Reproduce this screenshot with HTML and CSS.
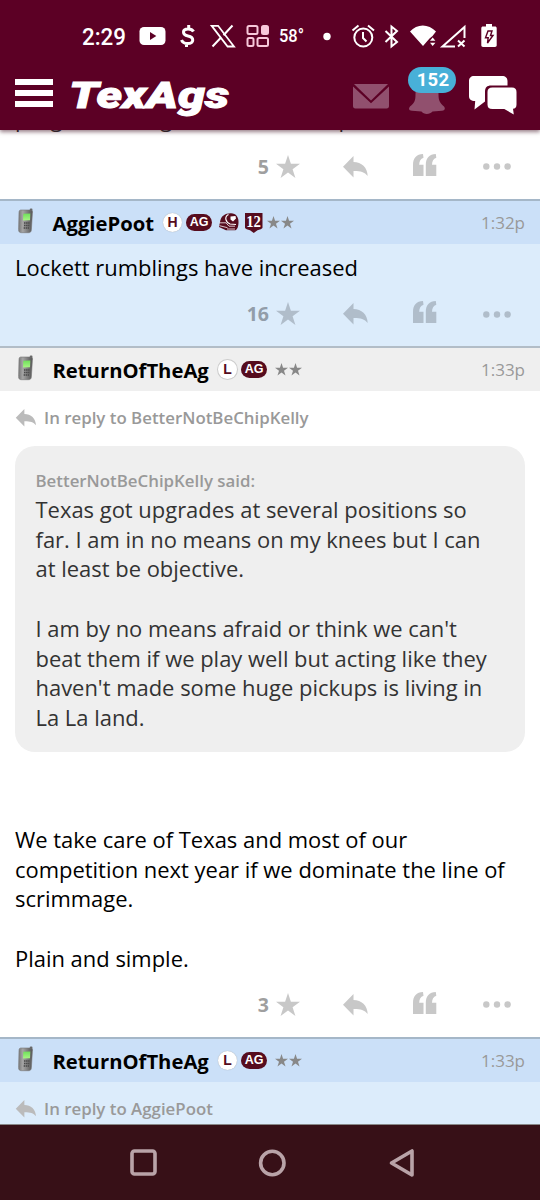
FILE: index.html
```html
<!DOCTYPE html>
<html lang="en">
<head>
<meta charset="utf-8">
<title>TexAgs</title>
<link rel="stylesheet" href="styles.css">
</head>
<body>
<svg class="defs" aria-hidden="true">
  <defs>
    <linearGradient id="case" x1="0" x2="1"><stop offset="0" stop-color="#777"/><stop offset=".3" stop-color="#a5a5a5"/><stop offset="1" stop-color="#555"/></linearGradient>
    <linearGradient id="lcd" x1="0" y1="0" x2="0" y2="1"><stop offset="0" stop-color="#6fe05a"/><stop offset="1" stop-color="#a8f585"/></linearGradient>
  </defs>
  <symbol id="star" viewBox="0 0 24 24"><path d="M12 0l2.900 8.700H24l-7.400 5.500L19.400 23 12 17.600 4.600 23l2.800-8.800L0 8.700h9.100z"/></symbol>
  <symbol id="reply" viewBox="0 0 25 22"><path d="M0 10.800L10.500 0v6C18.500 6 24.500 11.500 24.700 20 21.500 15.800 17 14.900 10.500 15v6.500z"/></symbol>
  <symbol id="quote" viewBox="0 0 24 22"><path d="M0 22V11C0 4 3.500.3 10 0l.5 3.700C7.500 4.600 6.400 7 6.200 10.700h4.300V22zM12.800 22V11C12.800 4 16.300.3 22.800 0l.5 3.700c-3 .9-4.100 3.300-4.300 7h4.300V22z"/></symbol>
  <symbol id="dots" viewBox="0 0 28 7"><circle cx="3.300" cy="3.500" r="3.200"/><circle cx="14" cy="3.500" r="3.200"/><circle cx="24.600" cy="3.500" r="3.200"/></symbol>
  <symbol id="phone" viewBox="0 0 16 26"><path d="M11.800 4V1c0-.8 2.600-.8 2.600 0v4z" fill="#666"/><path d="M3 2h9.500c1.600 0 2 1 1.900 3l-1 16.500c-.2 2.500-1 3.200-3 3.200H3.500c-2 0-3-.9-2.900-3.200L1 4.500C1.100 2.700 1.600 2 3 2z" fill="url(#case)" stroke="#777" stroke-width=".6"/><path d="M5.300 5.800l7-.3-.3 6.800-7 .2z" fill="url(#lcd)"/><path d="M6 15h5.500M6 17.500h5.300M5.700 20H11" stroke="#484848" stroke-width="1.300" stroke-dasharray="1.500 .6"/></symbol>
</svg>
<div class="screen">
  <header class="top">
    <div class="status">
      <svg class="status-icons" width="540" height="60" viewBox="0 0 540 60" fill="#fff">
        <text x="82" y="44.500" class="clock" textLength="44" lengthAdjust="spacingAndGlyphs">2:29</text>
        <rect x="139.500" y="27" width="26" height="18" rx="4.500"/><path d="M150 32v8l6.300-4z" fill="#5c0025"/>
        <g fill="none" stroke="#fff" stroke-width="3"><path d="M193.500 31.500c-1-2-3-2.600-5.500-2.600-6 0-6 6 0 7.100 6.500 1.300 6.300 7.500-.5 7.500-3 0-5-1-6-3.500M188.700 25v4M186.500 43v4"/></g>
        <path d="M211.700 25.800h6.400L234 46.500h-6.400z" fill="none" stroke="#fff" stroke-width="1.800"/><path d="M232.500 25.500l-9 9.800M221 37.500l-8.500 9" stroke="#fff" stroke-width="2"/>
        <g fill="none" stroke="#f7c8da" stroke-width="2"><rect x="247.500" y="26" width="10" height="8" rx="1.500"/><rect x="247.500" y="38" width="6" height="8" rx="1.500"/><rect x="257.500" y="38" width="10.500" height="8" rx="1.500"/><rect x="262" y="26" width="6" height="8" rx="1.500" fill="#f7c8da"/></g>
        <text x="279" y="42" class="temp" textLength="25" lengthAdjust="spacingAndGlyphs">58°</text>
        <circle cx="327" cy="36.500" r="3.700"/>
        <g fill="none" stroke="#fff" stroke-width="2"><circle cx="363.300" cy="37.500" r="9"/><path d="M363 32v6l3.500 3.500M352.500 30.500l6-5M374 30.500l-6-5"/><path d="M385.500 31l11.500 11-5.500 4.500V26.500l5.500 4.500-11.500 11"/></g>
        <path d="M410 31.500c7-8 18.500-8 26 0l-3.500 4.500-3 2.500-6.500 7.500z"/><path d="M430 40.700l2.700-3.200 2.700 3.200zM430 42.800l2.700 3.200 2.700-3.200z"/>
        <path d="M455 46.500h-12.500L464.500 27v11" fill="none" stroke="#fff" stroke-width="2"/><path d="M458 40.500l6.500 6M464.500 40.500l-6.500 6" stroke="#fff" stroke-width="2"/>
        <path d="M483 26.500h3V24h6v2.500h3c1 0 1.700.7 1.700 1.700v17c0 1-.7 1.700-1.700 1.700h-12c-1 0-1.700-.7-1.700-1.700v-17c0-1 .7-1.700 1.700-1.700z"/><path d="M488 31h4l-1.500 4.500h2.500l-5.500 7.500.7-5.300H485.500z" fill="none" stroke="#5c0025" stroke-width="1.400"/>
      </svg>
    </div>
    <div class="bar">
      <span class="menu"><i></i><i></i><i></i></span>
      <svg class="logo" width="160" height="40" viewBox="0 0 160 40"><text x="-3" y="32" textLength="160" lengthAdjust="spacingAndGlyphs">TexAgs</text></svg>
      <svg class="mail" width="36" height="25" viewBox="0 0 36 25" fill="#91506e"><path d="M1 0h34L18 16.500z"/><path d="M0 2.500l18 16.800L36 2.500V22c0 1.600-.8 2.400-2.400 2.400H2.400C.8 24.400 0 23.600 0 22z"/></svg>
      <span class="bell">
        <svg width="36" height="34" viewBox="0 0 36 34" fill="#91506e"><path d="M18 0C9 0 6.500 6 6.500 13c0 7-1 9-5.500 12.500-2 2.500-.8 4 2 4.300l9.500.8c2 3.200 8.500 3.200 11 0l9.500-.8c3-.3 3.500-2.200 2-4.300C31 22 29.500 20 29.500 13 29.500 6 27 0 18 0z"/></svg>
        <b class="unread">152</b>
      </span>
      <svg class="chat" width="48" height="40" viewBox="0 0 48 40" fill="#fff"><path d="M5 0h28c3.500 0 5.500 2 5.500 5v4.500H22c-4 0-6 2-6 6v10L5.500 33.500l.7-8.500C2 25 0 23.500 0 20V5c0-3 2-5 5-5z"/><path d="M23.500 11.500H43c3 0 4.500 1.500 4.500 4.500v12.500c0 3-1.500 4-3.500 4.200l.8 5.800-9.500-5.500H23.500c-3.500 0-5-1.500-5-4.500V16c0-3 1.500-4.500 5-4.500z"/></svg>
    </div>
  </header>

  <main>
    <article class="post first">
      <p class="tail">program taking the best team up</p>
      <div class="actions"><b>5</b><svg class="a-star"><use href="#star"/></svg><svg class="a-reply"><use href="#reply"/></svg><svg class="a-quote"><use href="#quote"/></svg><svg class="a-dots"><use href="#dots"/></svg></div>
    </article>

    <article class="post blue">
      <div class="head"><svg class="phone"><use href="#phone"/></svg><b class="name">AggiePoot</b>
        <span class="badges near"><span class="letter">H</span><span class="ag">AG</span>
          <svg class="helmet" width="21" height="18" viewBox="0 0 21 18"><path d="M2 9C3 3 7 .2 13 .3c5 .1 8 4 7.500 9.700-.3 4-1 6.500-3 7.200H8L1 14z" fill="#560c1e"/><path d="M10.500 1.500C6 4 7.500 9 12 11l6 .5" fill="none" stroke="#fff" stroke-width="1.200"/><path d="M12.500 3.500l5-.5.5 2.500-3 3-2.500-2z" fill="#fff"/><path d="M1 9.800h7l3 3.400h6M1.500 12.700l8 2M9 16h8" fill="none" stroke="#ead9df" stroke-width=".9"/></svg>
          <svg class="shield" width="18" height="20" viewBox="0 0 18 20"><path d="M0 0h17.500v14.500c0 1.500-3 2-5 2.700L8.800 20 5 17.200c-2-.7-5-1.200-5-2.700z" fill="#560c1e"/><text x="1.200" y="14" textLength="14.800" lengthAdjust="spacingAndGlyphs">12</text></svg>
        </span>
        <span class="stars"><svg><use href="#star"/></svg><svg><use href="#star"/></svg></span><time>1:32p</time></div>
      <div class="body short">Lockett rumblings have increased</div>
      <div class="actions"><b>16</b><svg class="a-star"><use href="#star"/></svg><svg class="a-reply"><use href="#reply"/></svg><svg class="a-quote"><use href="#quote"/></svg><svg class="a-dots"><use href="#dots"/></svg></div>
    </article>

    <article class="post plain">
      <div class="head"><svg class="phone"><use href="#phone"/></svg><b class="name">ReturnOfTheAg</b>
        <span class="badges"><span class="letter ring">L</span><span class="ag">AG</span></span>
        <span class="stars wide"><svg><use href="#star"/></svg><svg><use href="#star"/></svg></span><time>1:33p</time></div>
      <div class="inreply"><svg><use href="#reply"/></svg><span>In reply to BetterNotBeChipKelly</span></div>
      <blockquote><div class="said">BetterNotBeChipKelly said:</div>Texas got upgrades at several positions so<br>far. I am in no means on my knees but I can<br>at least be objective.<br><br>I am by no means afraid or think we can't<br>beat them if we play well but acting like they<br>haven't made some huge pickups is living in<br>La La land.</blockquote>
      <div class="body long">We take care of Texas and most of our<br>competition next year if we dominate the line of<br>scrimmage.<br><br>Plain and simple.</div>
      <div class="actions"><b>3</b><svg class="a-star"><use href="#star"/></svg><svg class="a-reply"><use href="#reply"/></svg><svg class="a-quote"><use href="#quote"/></svg><svg class="a-dots"><use href="#dots"/></svg></div>
    </article>

    <article class="post blue">
      <div class="head"><svg class="phone"><use href="#phone"/></svg><b class="name">ReturnOfTheAg</b>
        <span class="badges"><span class="letter">L</span><span class="ag">AG</span></span>
        <span class="stars wide"><svg><use href="#star"/></svg><svg><use href="#star"/></svg></span><time>1:33p</time></div>
      <div class="inreply"><svg><use href="#reply"/></svg><span>In reply to AggiePoot</span></div>
    </article>
  </main>

  <nav class="system">
    <svg width="540" height="75" viewBox="0 0 540 75" fill="none" stroke="#b9a3a8" stroke-width="3.600" stroke-linejoin="round"><rect x="132" y="26" width="23" height="23" rx="2.500"/><circle cx="272.300" cy="38" r="11.700"/><path d="M412 26v24L391.500 38z"/></svg>
  </nav>
</div>
</body>
</html>
```
FILE: styles.css
```css
* { box-sizing: border-box; }
body { margin: 0; font-family: "Open Sans", "Noto Sans", sans-serif; background: #fff; }
p, blockquote { margin: 0; }
svg { display: block; flex: none; }
.defs { position: absolute; width: 0; height: 0; }
.screen { width: 540px; height: 1200px; display: flex; flex-direction: column; overflow: hidden; }

.top { height: 130px; flex: none; background: #5c0025; box-shadow: 0 2px 4px rgba(50, 0, 20, .5); z-index: 1; }
.status { height: 60px; }
.clock { font: 500 23px Roboto, sans-serif; }
.temp { font: 500 18px Roboto, sans-serif; }
.bar { height: 70px; display: flex; align-items: flex-start; padding-left: 15px; }
.menu { width: 38px; margin-top: 19px; display: flex; flex-direction: column; gap: 5.500px; }
.menu i { height: 5.500px; background: #fff; }
.logo { margin: 15.500px 0 0 19px; overflow: visible; }
.logo text { font: italic 900 37px Roboto, sans-serif; fill: #fff; stroke: #fff; stroke-width: 1; }
.mail { margin: 24px 0 0 121px; }
.bell { position: relative; margin: 21px 0 0 20px; }
.unread { position: absolute; left: -1px; top: -14px; width: 48px; height: 26px; padding-left: 2px; border-radius: 13px; background: #48b0d8; color: #fff; font: 700 18.500px/26px Roboto, sans-serif; letter-spacing: .2px; text-align: center; }
.chat { margin: 16px 0 0 24px; }

main { height: 995px; flex: none; overflow: hidden; border-bottom: 1px solid #888; }
.first { height: 69px; display: flex; flex-direction: column; justify-content: flex-end; }
.tail { height: 30px; flex: none; padding-left: 15px; font-size: 21.950px; line-height: 30px; white-space: nowrap; color: #333; }
.post .actions { display: flex; align-items: center; height: 64px; flex: none; color: #9f9f9f; fill: #c8c8c8; }
.first .actions { height: 65px; }
.actions b { width: 269px; text-align: right; font-size: 19.500px; line-height: 24px; }
.a-star { width: 24px; height: 24px; margin-left: 7px; }
.a-reply { width: 25px; height: 22px; margin-left: 43px; }
.a-quote { width: 24px; height: 22px; margin: 0 0 4px 45px; }
.a-dots { width: 28px; height: 7px; margin-left: 46px; }
.blue { background: #dcecfb; }
.blue .actions { color: #929da9; fill: #b0bdca; }
.head { height: 45px; display: flex; align-items: center; padding: 0 15px 0 18px; border-top: 2px solid #a5b7c8; background: #cbe0f8; }
.plain .head { background: #efefef; border-color: #b2bdc7; }
.phone { width: 16px; height: 26px; margin-bottom: 3px; }
.name { font-size: 20.250px; line-height: 28px; margin-left: 18.500px; width: 165.500px; white-space: nowrap; color: #000; }
.name:has(+ .near) { width: 110.500px; }
.badges { display: flex; align-items: center; margin-bottom: 1px; }
.letter { width: 19px; height: 19px; border-radius: 50%; background: #fff; color: #560c1e; font: 700 14px/19px "Liberation Sans", sans-serif; text-align: center; margin-right: 4px; box-shadow: 0 0 1px #999; }
.ring { box-shadow: 0 0 0 1px #ccc; }
.ag { width: 26px; height: 17px; border-radius: 9px; background: #560c1e; color: #fff; font: 700 12.500px/17px "Liberation Sans", sans-serif; text-align: center; }
.helmet { margin-left: 6px; }
.shield { margin: 2px 0 0 6px; }
.shield text { font: 700 16px "Liberation Serif", serif; fill: #fff; }
.stars { display: flex; gap: 1px; margin-left: 4px; fill: #888; }
.stars svg { width: 13px; height: 13px; }
.wide { margin-left: 8px; }
.head time { margin-left: auto; color: #999; font-size: 17px; }
.body { font-size: 21.950px; line-height: 29.700px; padding-left: 15px; color: #000; white-space: nowrap; }
.short { height: 45px; padding-top: 9px; }
.blue .actions { height: 57px; padding-bottom: 7px; }
.inreply { height: 55px; display: flex; align-items: center; padding: 0 0 2px 15px; color: #999; fill: #bbb; font-size: 16.850px; font-weight: 600; }
.inreply svg { width: 22px; height: 18px; margin-right: 7px; }
blockquote { margin: 0 15px; height: 306px; padding: 20px 20.500px; border-radius: 20px; background: #efefef; color: #333; font-size: 21.950px; line-height: 29.700px; white-space: nowrap; }
.said { height: 29px; font-size: 16.850px; font-weight: 600; color: #999; }
.long { padding-top: 73px; height: 226px; }
.plain .actions { height: 59px; padding-bottom: 6px; }
.system { height: 75px; background: #371017; }
```
